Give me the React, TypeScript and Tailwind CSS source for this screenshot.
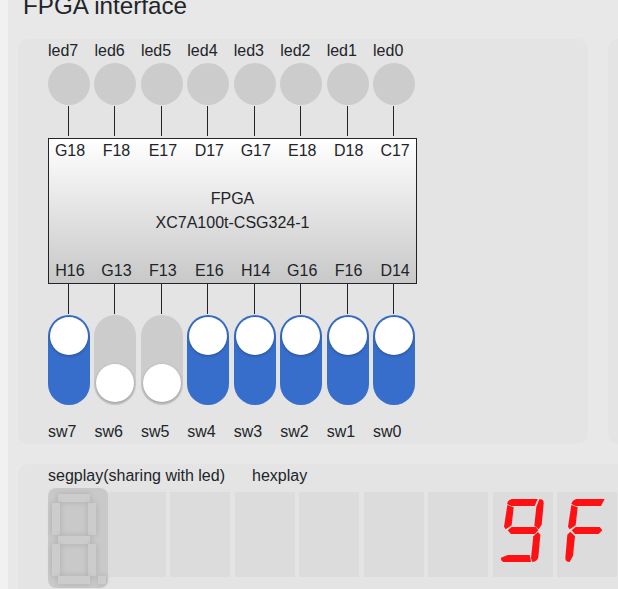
import React from "react";

const leds = ["led7", "led6", "led5", "led4", "led3", "led2", "led1", "led0"];
const ledPins = ["G18", "F18", "E17", "D17", "G17", "E18", "D18", "C17"];
const switchPins = ["H16", "G13", "F13", "E16", "H14", "G16", "F16", "D14"];
const switches = [
  { name: "sw7", on: true },
  { name: "sw6", on: false },
  { name: "sw5", on: false },
  { name: "sw4", on: true },
  { name: "sw3", on: true },
  { name: "sw2", on: true },
  { name: "sw1", on: true },
  { name: "sw0", on: true },
];

function Row({ children }: { children: React.ReactNode }) {
  return <div className="flex gap-[4.45px]">{children}</div>;
}

function Wire() {
  return <div className="ml-5 h-[30px] w-px bg-[#212529]" />;
}

function Pins({ names }: { names: string[] }) {
  return (
    <Row>
      {names.map((n) => (
        <span key={n} className="w-[42px] shrink-0 text-center">{n}</span>
      ))}
    </Row>
  );
}

function Toggle({ on }: { on: boolean }) {
  return (
    <div
      className={
        on
          ? "flex h-[90px] w-[42px] flex-col items-center justify-start rounded-full bg-[#376ecb] pt-[2px]"
          : "flex h-[90px] w-[42px] flex-col items-center justify-end rounded-full bg-[#ccc] pb-[3px]"
      }
    >
      <div className="size-[38px] rounded-full bg-white shadow-[0_1px_3px_rgba(0,0,0,0.28)]" />
    </div>
  );
}

function SegDisplay() {
  const h = "h-2 w-8 ml-[10px] bg-[#ccc] shadow-[0_0_6px_rgba(0,0,0,0.14)]";
  const v = "h-8 w-2 bg-[#ccc] shadow-[0_0_6px_rgba(0,0,0,0.14)]";
  return (
    <div className="relative z-10 flex h-[100px] w-[60px] shrink-0 flex-col rounded-lg bg-[#c9c9c9] pt-[6px]">
      <div className={h} />
      <div className="mt-px ml-1 flex gap-7">
        <div className={v} />
        <div className={v} />
      </div>
      <div className={"mt-px " + h} />
      <div className="ml-1 flex gap-7">
        <div className={v} />
        <div className={v} />
      </div>
      <div className="flex gap-2">
        <div className={h} />
        <div className="size-2 bg-[#ccc] shadow-[0_0_6px_rgba(0,0,0,0.14)]" />
      </div>
    </div>
  );
}

// Slanted segments, drawn on a grid three times finer than the digit cell.
// "A" is the longer top bar used when the upper right segment is dark.
const segments: Record<string, string> = {
  a: "M42 36 Q44 24 56 21 H134 L125 42 H55 Z",
  A: "M43 36 Q46 24 58 21 H143 L132 42 H56 Z",
  b: "M139 22 Q152 19 152 34 L146 98 L137 112 L124 101 L130 44 Z",
  c: "M135 120 L142 128 L136 195 Q133 209 118 210 L114 199 L121 133 Z",
  d: "M24 197 L44 189 H110 L114 210 H32 Q24 208 24 197 Z",
  e: "M40 119 L54 133 L48 191 L38 210 Q25 210 25 198 L31 128 Z",
  f: "M43 39 L62 46 L56 100 L38 112 L33 104 Z",
  g: "M44 115 L56 105 H128 L136 115 L125 126 H54 Z",
};

function Digit({ lit }: { lit: string }) {
  return (
    <div className="h-[85px] w-[60px] shrink-0 bg-[#dcdcdc]">
      <svg viewBox="0 0 180 255" className="block h-full w-full" fill="#ff1012">
        {lit.split("").map((s) => (
          <path key={s} d={segments[s]} />
        ))}
      </svg>
    </div>
  );
}

export default function App() {
  return (
    <div className="h-[589px] w-[618px] overflow-hidden bg-[#f1f1f1] pl-2 font-['Liberation_Sans',Arial,sans-serif] text-base leading-6 text-[#212529]">
      <div className="h-full bg-[#e8e8e8] pl-[10px]">
        <div className="h-[39px] overflow-hidden pl-[5px]">
          <h1 className="-mt-[9px] text-[24.2px] leading-[29px]">FPGA interface</h1>
        </div>
        <div className="flex gap-5">
          <section className="h-[405px] w-[570px] shrink-0 rounded-[10px] bg-[#e4e4e4] pl-[30px]">
            <Row>
              {leds.map((name) => (
                <div key={name} className="w-[42px] shrink-0">
                  <div>{name}</div>
                  <div className="mb-px size-[42px] rounded-full bg-[#ccc]" />
                  <Wire />
                </div>
              ))}
            </Row>
            <div className="mt-[2px] flex h-[146px] w-[369px] flex-col justify-between border border-[#212529] bg-linear-to-b from-white to-[#c8c8c8]">
              <Pins names={ledPins} />
              <div className="text-center">
                <div>FPGA</div>
                <div>XC7A100t-CSG324-1</div>
              </div>
              <Pins names={switchPins} />
            </div>
            <Row>
              {switches.map((s) => (
                <div key={s.name} className="w-[42px] shrink-0">
                  <Wire />
                  <div className="mt-px mb-[15px]">
                    <Toggle on={s.on} />
                  </div>
                  <div>{s.name}</div>
                </div>
              ))}
            </Row>
          </section>
          <section className="h-[405px] w-[570px] shrink-0 rounded-[10px] bg-[#e4e4e4]" />
        </div>
        <section className="mt-5 h-[150px] w-[1160px] rounded-[10px] bg-[#e4e4e4] pl-[30px]">
          <div className="flex">
            <span className="w-[204px]">segplay(sharing with led)</span>
            <span>hexplay</span>
          </div>
          <div className="flex">
            <SegDisplay />
            <div className="mt-1 -ml-[2px] flex gap-[4.45px]">
              {["", "", "", "", "", "", "abcdfg", "Aefg"].map((lit, i) => (
                <Digit key={i} lit={lit} />
              ))}
            </div>
          </div>
        </section>
      </div>
    </div>
  );
}
